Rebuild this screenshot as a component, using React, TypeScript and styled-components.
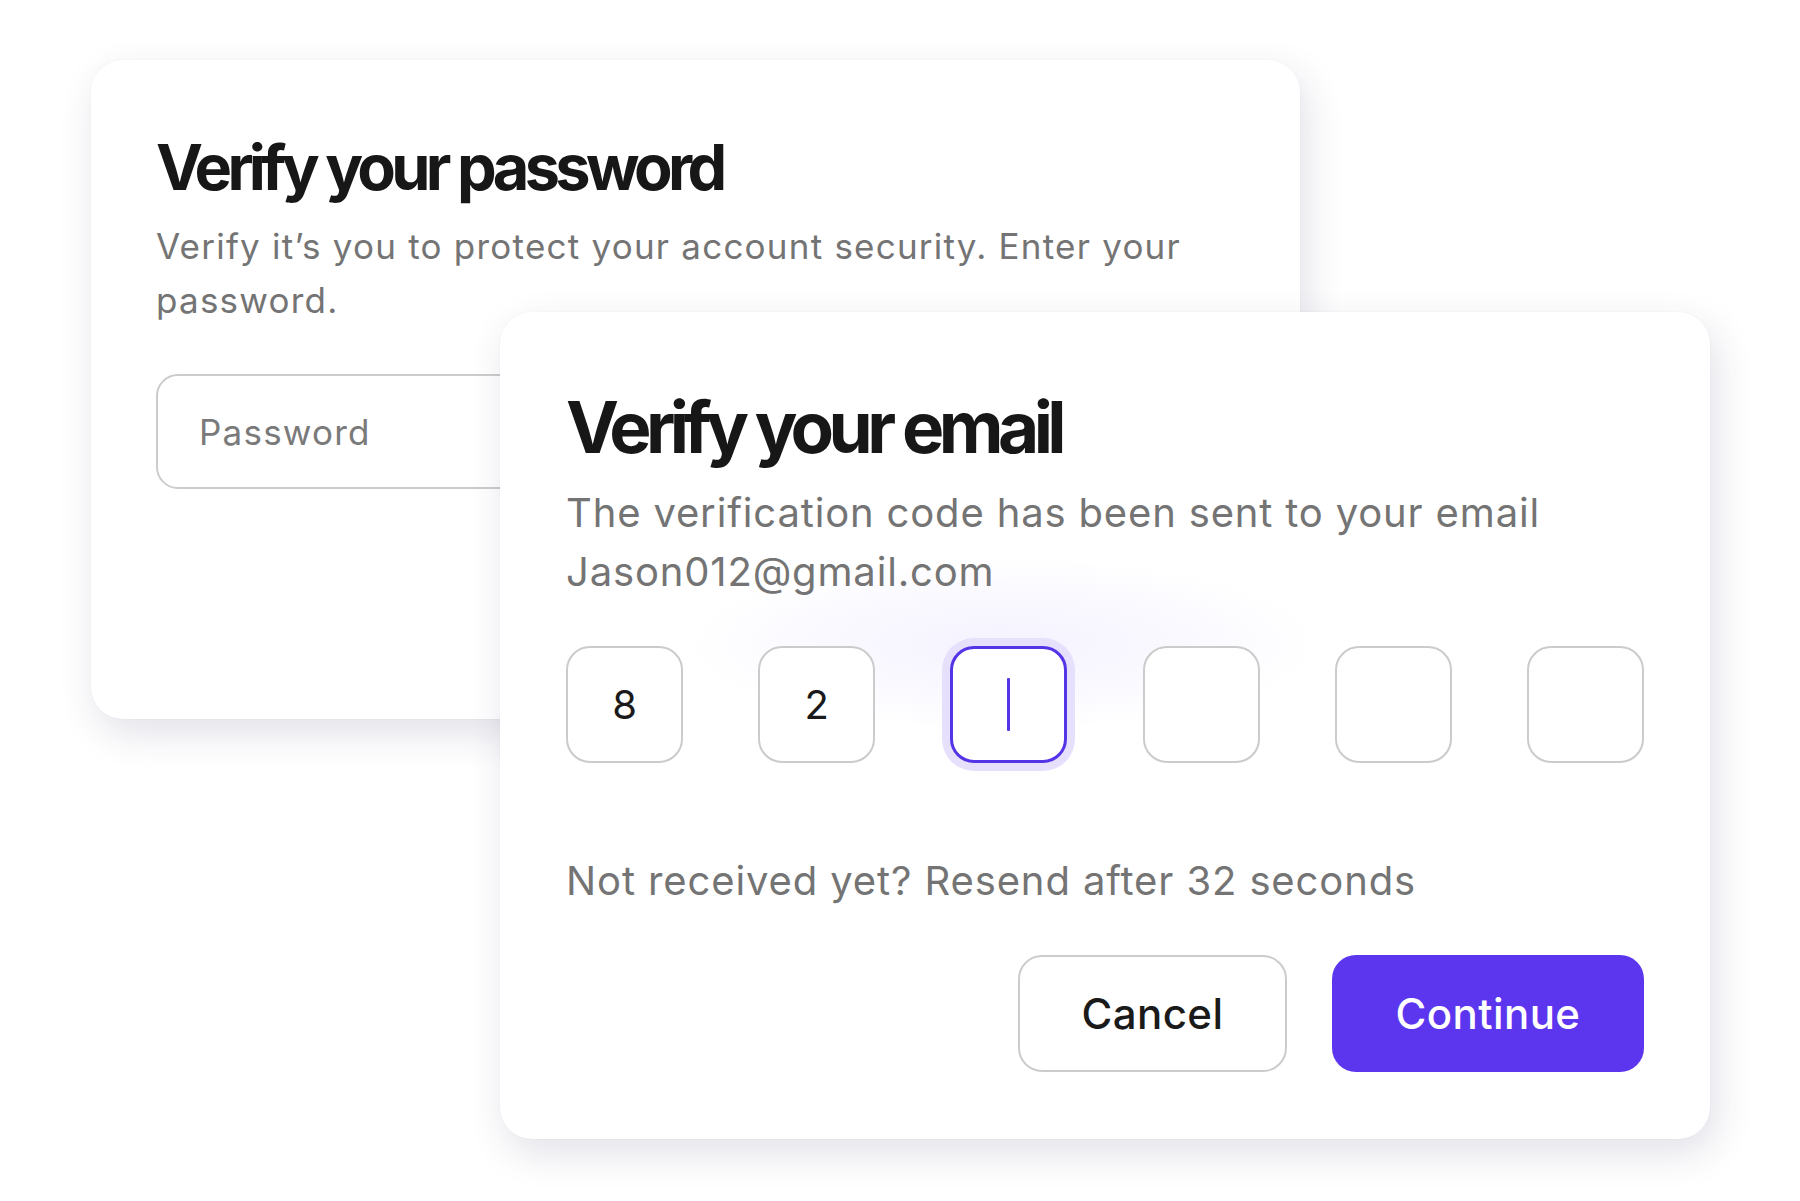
import React from 'react';
import styled, { createGlobalStyle, css } from 'styled-components';

const GlobalStyle = createGlobalStyle`
  html, body {
    margin: 0;
    padding: 0;
    background: #ffffff;
  }
  body {
    font-family: Inter, "Noto Sans", "Liberation Sans", sans-serif;
    -webkit-font-smoothing: antialiased;
  }
`;

const Stage = styled.div`
  width: 1800px;
  height: 1201px;
  box-sizing: border-box;
  padding: 60px 0 0 91px;
  display: grid;
  grid-template-columns: auto;
  grid-template-rows: auto;
  align-items: start;
  justify-items: start;
  overflow: hidden;
`;

const Card = styled.div`
  grid-area: 1 / 1;
  box-sizing: border-box;
  background: #ffffff;
  border-radius: 32px;
  box-shadow: 6px 14px 38px rgba(40, 40, 90, 0.14), 0 0 2px rgba(40, 40, 90, 0.05);
`;

const BackCard = styled(Card)`
  width: 1209px;
  height: 659px;
  padding: 73px 65px 0 65px;
`;

const FrontCard = styled(Card)`
  width: 1210px;
  height: 827px;
  margin: 252px 0 0 409px;
  padding: 76px 66px 0 66px;
  position: relative;
  isolation: isolate;
`;

const Title = styled.h1<{ $size: number; $track: number }>`
  margin: 0;
  font-weight: 700;
  color: #171717;
  font-size: ${({ $size }) => $size}px;
  line-height: 1.1;
  letter-spacing: ${({ $track }) => $track}em;
`;

const Subtitle = styled.p<{ $size: number; $lh: number; $track: number }>`
  margin: 17px 0 0 0;
  color: #747474;
  font-weight: 400;
  font-size: ${({ $size }) => $size}px;
  line-height: ${({ $lh }) => $lh}px;
  letter-spacing: ${({ $track }) => $track}em;
`;

const PasswordField = styled.div`
  margin-top: 47px;
  height: 115px;
  box-sizing: border-box;
  border: 2px solid #cccccc;
  border-radius: 22px;
  display: flex;
  align-items: center;
  padding-left: 41px;
  font-size: 35px;
  letter-spacing: 0.035em;
  color: #7a7a7a;
`;

const CodeRow = styled.div`
  margin-top: 45px;
  display: flex;
  justify-content: space-between;
`;

const CodeBox = styled.div<{ $active?: boolean }>`
  position: relative;
  width: 117px;
  height: 117px;
  box-sizing: border-box;
  border: 2px solid #cbcbcb;
  border-radius: 24px;
  display: flex;
  align-items: center;
  justify-content: center;
  font-size: 40px;
  color: #1a1a1a;
  background: #ffffff;
  ${({ $active }) =>
    $active &&
    css`
      border: 3px solid #5533e6;
      box-shadow: 0 0 0 8px #e6e0fd;
      &::before {
        content: '';
        position: absolute;
        left: -260px;
        top: -90px;
        width: 620px;
        height: 170px;
        border-radius: 50%;
        background: radial-gradient(
          ellipse at center,
          rgba(125, 100, 255, 0.08) 0%,
          rgba(125, 100, 255, 0.035) 45%,
          rgba(125, 100, 255, 0) 72%
        );
        z-index: -1;
        pointer-events: none;
      }
    `}
`;

const Caret = styled.span`
  display: block;
  width: 3px;
  height: 53px;
  background: #5533e6;
  border-radius: 1px;
`;

const Resend = styled.p`
  margin: 88px 0 0 0;
  color: #747474;
  font-size: 40px;
  line-height: 59px;
  letter-spacing: 0.022em;
`;

const Actions = styled.div`
  margin-top: 45px;
  display: flex;
  justify-content: flex-end;
  gap: 45px;
`;

const Button = styled.button<{ $primary?: boolean }>`
  height: 117px;
  box-sizing: border-box;
  border-radius: 24px;
  font-family: inherit;
  font-size: 42px;
  font-weight: 500;
  letter-spacing: 0.01em;
  cursor: pointer;
  ${({ $primary }) =>
    $primary
      ? css`
          width: 312px;
          border: none;
          background: #5c36ef;
          color: #ffffff;
        `
      : css`
          width: 269px;
          border: 2px solid #cccccc;
          background: #ffffff;
          color: #1a1a1a;
        `}
`;

const code = ['8', '2', '', '', '', ''];

export default function App() {
  return (
    <>
      <GlobalStyle />
      <Stage>
        <BackCard>
          <Title $size={63} $track={-0.074}>
            Verify your password
          </Title>
          <Subtitle $size={35} $lh={54} $track={0.035}>
            Verify it’s you to protect your account security. Enter your password.
          </Subtitle>
          <PasswordField>Password</PasswordField>
        </BackCard>

        <FrontCard>
          <Title $size={71} $track={-0.078}>
            Verify your email
          </Title>
          <Subtitle $size={40} $lh={59} $track={0.021}>
            The verification code has been sent to your email
            <br />
            Jason012@gmail.com
          </Subtitle>
          <CodeRow>
            {code.map((digit, idx) => (
              <CodeBox key={idx} $active={idx === 2}>
                {idx === 2 ? <Caret /> : digit}
              </CodeBox>
            ))}
          </CodeRow>
          <Resend>Not received yet? Resend after 32 seconds</Resend>
          <Actions>
            <Button>Cancel</Button>
            <Button $primary>Continue</Button>
          </Actions>
        </FrontCard>
      </Stage>
    </>
  );
}
